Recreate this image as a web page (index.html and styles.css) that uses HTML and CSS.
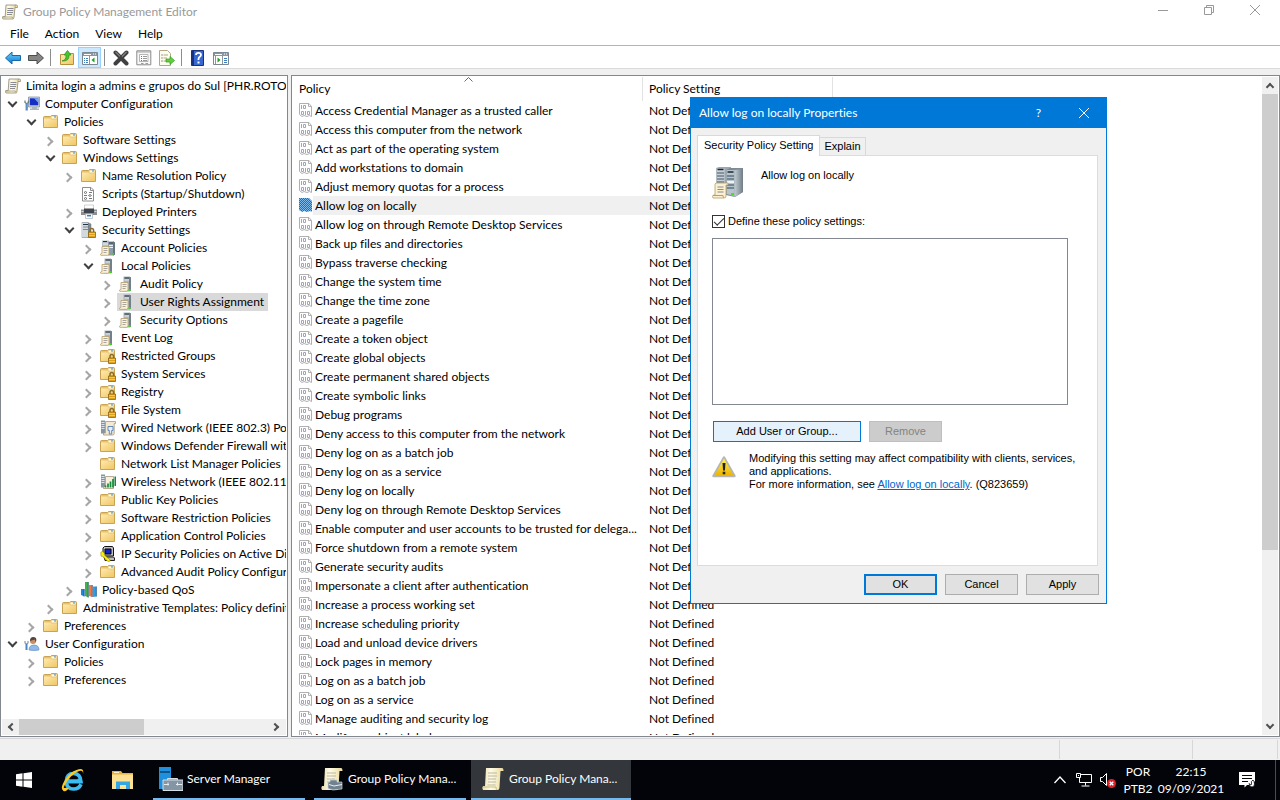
FILE: index.html
```html
<!DOCTYPE html>
<html lang="en">
<head>
    <meta charset="UTF-8">
    <meta name="viewport" content="width=device-width, initial-scale=1.0">
    <title>Group Policy Management Editor</title>
    <link rel="stylesheet" href="styles.css">
</head>
<body>
    <!-- Icon sprite -->
    <svg class="sprite" aria-hidden="true">
        <defs>
            <linearGradient id="gFolder" x1="0" y1="0" x2="1" y2="1"><stop offset="0" stop-color="#ffeab0"/><stop offset="1" stop-color="#efc765"/></linearGradient>
            <linearGradient id="gPaper" x1="0" y1="0" x2="1" y2="0"><stop offset="0" stop-color="#e9dcab"/><stop offset=".4" stop-color="#fffbe6"/><stop offset="1" stop-color="#ead99c"/></linearGradient>
            <linearGradient id="gMetal" x1="0" y1="0" x2="1" y2="0"><stop offset="0" stop-color="#c3ccd3"/><stop offset="1" stop-color="#6f7c86"/></linearGradient>
            <linearGradient id="gBlue" x1="0" y1="0" x2="0" y2="1"><stop offset="0" stop-color="#6fd0ff"/><stop offset="1" stop-color="#0a78cf"/></linearGradient>
            <linearGradient id="gWarn" x1="0" y1="0" x2="0" y2="1"><stop offset="0" stop-color="#fff44a"/><stop offset="1" stop-color="#eeb200"/></linearGradient>
            <pattern id="pDither" width="2" height="2" patternUnits="userSpaceOnUse"><path fill="#0078d7" d="M0 0h1v1H0zM1 1h1v1H1z"/><path fill="#7db8e8" d="M1 0h1v1H1zM0 1h1v1H0z"/></pattern>
        </defs>
        <symbol id="scroll" viewBox="0 0 16 16">
            <path d="M4 1h10.500q1 0 1 1.500v1h-2.500l-1 9.500q0 2-1.500 2H1.500Q.3 15 .5 13.500l.2-.9h2.500z" fill="url(#gPaper)" stroke="#8d8877" stroke-width=".8"/>
            <path d="M.8 13h9.500q0 1.500 1 1.800M13 3.500V2q.3-1 1-1" fill="none" stroke="#a29a7b" stroke-width=".8"/>
            <path d="M5.500 4.500h6M5.300 6.500h6M5 8.500h6M5 10.500h5" stroke="#8b8b93"/>
        </symbol>
        <symbol id="folder" viewBox="0 0 16 16">
            <path d="M.5 3.500q0-1 1-1h6l1-1h5q1 0 1 1v11H.5z" fill="#e9c36b" stroke="#c9a252"/>
            <path d="M8.500 2.500h5v2h-5z" fill="#fff"/><path d="M11 3h2" stroke="#2c8be0"/>
            <path d="M1 4.500h6.500l1 1H14V13H1z" fill="url(#gFolder)"/>
        </symbol>
        <symbol id="lock" viewBox="0 0 16 16">
            <path d="M10 10V8.500q0-2 1.800-2t1.800 2V10" fill="none" stroke="#8a6e2c" stroke-width="1.500"/>
            <path d="M8.500 10h7v5.500h-7z" fill="#dca11e" stroke="#8d6410" stroke-width=".8"/>
            <path d="M9 11.500h6M9 13.500h6" stroke="#f7d264" stroke-width=".8"/>
        </symbol>
        <symbol id="folder-lock" viewBox="0 0 16 16"><use href="#folder"/><use href="#lock"/></symbol>
        <symbol id="tower" viewBox="0 0 16 16">
            <path d="M1 .5h6l3 1.500v13l-3 .5H1z" fill="url(#gMetal)" stroke="#87939b" stroke-width=".6"/>
            <path d="M1 1h6.500v14H1z" fill="#d3dade"/>
            <path d="M2 2.500h5" stroke="#253643"/><path d="M2 5h5M2 7.500h5" stroke="#7d8a94"/><path d="M7.500 1v14" stroke="#66747e" stroke-width=".8"/>
        </symbol>
        <symbol id="tower-lock" viewBox="0 0 16 16"><use href="#tower"/><use href="#lock" x="-1"/></symbol>
        <symbol id="minidoc" viewBox="0 0 16 16">
            <path d="M2 6.500h7v7.300q0 1.500-1.500 1.500H.8q-.8-1.500.5-1.800H2z" fill="#fbf3d8" stroke="#b49c6b" stroke-width=".8"/>
            <path d="M3.500 8.500h4M3.500 10.500h4M3.500 12.500h3" stroke="#96918c" stroke-width=".8"/>
        </symbol>
        <symbol id="server" viewBox="0 0 16 16">
            <path d="M4.500.5H10v15H4.500z" fill="#aab5bd"/><path d="M10 .5l2 .7v13.500l-2 .8z" fill="#71808b"/>
            <path d="M5.500 2H10" stroke="#17242e"/><path d="M5.500 4H10" stroke="#e6ecf0"/>
            <use href="#minidoc"/><path d="M9.500 13h2v2h-2z" fill="#3ed916"/>
        </symbol>
        <symbol id="servers" viewBox="0 0 16 16">
            <path d="M2 .5h7v12H2z" fill="#b4c0c7"/><path d="M8 1.500h6v14H8z" fill="#8f9da6"/><path d="M13 1.500l2 .7v12.500l-2 .8z" fill="#65747e"/>
            <path d="M3 1.500h4M9 3h4" stroke="#22313b"/><path d="M3 4h5M9 5.500h4M9 7.500h4" stroke="#eef2f4"/>
            <use href="#minidoc"/><path d="M12 13h2v1.500h-2z" fill="#3ed916"/>
        </symbol>
        <symbol id="computer" viewBox="0 0 16 16">
            <path d="M4.500 1h11v10h-11z" fill="#cfd6dc" stroke="#8b949c" stroke-width=".8"/>
            <path d="M5.800 2.300h8.500v7H5.800z" fill="#1430c4"/><path d="M10 2.300h4.300v4.500z" fill="#7da3f4"/>
            <path d="M8 11h5v1.500h2V14H6v-1.500h2z" fill="#aeb6bc"/>
            <path d="M1 4.500v2l1.700 1.200 1.700-1.200v-2" fill="none" stroke="#6f7d87" stroke-width="1.300"/><path d="M2.700 7.500v7" stroke="#5b8fc4" stroke-width="2.300"/>
        </symbol>
        <symbol id="user" viewBox="0 0 16 16">
            <path d="M5 14q0-5 5-5t5 5q-5 1-10 0z" fill="#8fb9e8" stroke="#5a86ba" stroke-width=".6"/>
            <circle cx="9" cy="5" r="3" fill="#c58e63"/><path d="M6 5q0-4 3.200-4t3.200 3l-.6 2.500-1-3z" fill="#55453b"/>
            <path d="M1 5v2l1.500 1.200L4 7V5" fill="none" stroke="#8c99a2" stroke-width="1.200"/><path d="M2.500 8V14" stroke="#4d86c0" stroke-width="2"/>
        </symbol>
        <symbol id="script" viewBox="0 0 16 16">
            <path d="M1.500 1.500h8.500l2.500 2.500v11h-11z" fill="#fff" stroke="#8d8d8d"/><path d="M9.500 1.500V4.500h3" fill="none" stroke="#8d8d8d"/>
            <path d="M3 6.500l1.500-1 1.500 1-1.500 1zM8 6.500h3M3 9.500h3M7.500 9.500l1.500-1 1.500 1-1.500 1zM3 12.500l1.500-1 1.500 1-1.500 1zM8 12.500h3" fill="none" stroke="#666" stroke-width=".9"/>
        </symbol>
        <symbol id="printer" viewBox="0 0 16 16">
            <path d="M3.500 1h9v5h-9z" fill="#fff" stroke="#bbb" stroke-width=".7"/>
            <path d="M0 5.500h16V11H0z" fill="#8a8f94"/><path d="M3 4.500h10V9H3z" fill="#40464b"/><path d="M.5 7.500h2M13.500 7.500h2" stroke="#d5d9dc"/>
            <path d="M4.500 10h7v4.500h-7z" fill="#fff" stroke="#a9b3ba" stroke-width=".7"/><path d="M6 11.700h4" stroke="#2c7fc9" stroke-width="1.500"/>
        </symbol>
        <symbol id="wired" viewBox="0 0 16 16">
            <path d="M1 .5h4v13H1z" fill="#8795a0"/><path d="M1.500 2.500h3M1.500 4.500h3M1.500 6.500h3M1.500 8.500h3" stroke="#dce4e9"/>
            <path d="M5.500 1.500h10v2h-1.300v10q0 1.500-1.500 1.500H3.500v-2h2z" fill="#f3ead0" stroke="#a5987a" stroke-width=".8"/>
            <path d="M8 6.500h5v4h-1.300v3.500H9.300v-3.500H8z" fill="#e8eef8" stroke="#6486ba"/>
        </symbol>
        <symbol id="wireless" viewBox="0 0 16 16">
            <path d="M1 .5h4v13H1z" fill="#8795a0"/><path d="M1.500 2.500h3M1.500 4.500h3M1.500 6.500h3M1.500 8.500h3" stroke="#dce4e9"/>
            <path d="M5.500 2.500h8v12H3.500v-2h2z" fill="#f7f0dc" stroke="#a5987a" stroke-width=".8"/>
            <path d="M5.500 13.500v-2M8 13.500V9.500M10.500 13.500V7.500M13 13.500V5M15.300 12V2.500" stroke="#168a3a" stroke-width="1.700"/>
        </symbol>
        <symbol id="ipsec" viewBox="0 0 16 16">
            <path d="M3 2l1.500-1.500h8l1 1.500v8H3z" fill="#c0c0c0" stroke="#111"/><path d="M5 3h6v5H5z" fill="#1024c8" stroke="#000"/>
            <path d="M4 11h9.500l1 1v2.500H5z" fill="#bdbdbd" stroke="#222"/>
            <path d="M.8 6.300l2-1 1.500 2v1.700l6 5-1 1.500-1.800-.3-4.800-5H1z" fill="#fff200" stroke="#7a7000" stroke-width=".5"/>
        </symbol>
        <symbol id="qos" viewBox="0 0 16 16">
            <path d="M0 7h3.500v7.500L0 13z" fill="#1d89d8"/><path d="M4 0h3.500v15.500L4 14z" fill="#44b04c"/><path d="M8 3h3.500v12L8 14z" fill="#ef7a48"/><path d="M12 4.500h3.500v10L12 15z" fill="#2f9fe8"/>
            <path d="M3 7v7.500M7.200 0v15.500M11.200 3v12M15.300 4.500v10" stroke="#234c78" stroke-width=".7"/>
        </symbol>
        <symbol id="bits" viewBox="0 0 14 14">
            <path d="M.5.500h9.500l2.500 3v10l-2-1-2.500 1-3-1-2 1-2.500-2z" fill="#fff" stroke="#b0b0b0"/><path d="M9.500.500V3.500H12.500" fill="none" stroke="#b0b0b0"/>
            <path d="M2.500 2v4M4.500 2.500h2v3h-2zM2.500 8.500h2v3h-2zM6.500 8v4M8.500 8.500h2v3h-2z" fill="none" stroke="#a4a4b6"/>
        </symbol>
        <symbol id="bits-selected" viewBox="0 0 14 14"><path d="M0 0h10l3 3v11l-2-1-3 1-3-1-2 1-3-2z" fill="url(#pDither)"/></symbol>
    </svg>

    <div class="desktop">
        <main class="window">
            <header class="titlebar">
                <svg class="icon"><use href="#scroll"/></svg>
                <h1>Group Policy Management Editor</h1>
                <div class="window-controls">
                    <button type="button" aria-label="Minimize"><svg viewBox="0 0 10 10"><path d="M0 5.500h10"/></svg></button>
                    <button type="button" aria-label="Restore"><svg viewBox="0 0 10 10"><path d="M.5 2.500h7v7h-7zM2.500 2.500v-2h7v7h-2"/></svg></button>
                    <button type="button" aria-label="Close"><svg viewBox="0 0 10 10"><path d="M0 0l10 10M10 0L0 10"/></svg></button>
                </div>
            </header>

            <nav class="menubar">
                <button type="button">File</button>
                <button type="button">Action</button>
                <button type="button">View</button>
                <button type="button">Help</button>
            </nav>

            <div class="toolbar">
                <button type="button" aria-label="Back"><svg class="icon" viewBox="0 0 16 16"><path d="M.5 8L7 2v3.500h8.500v5H7V14z" fill="url(#gBlue)" stroke="#1668a8"/></svg></button>
                <button type="button" aria-label="Forward"><svg class="icon" viewBox="0 0 16 16"><path d="M15.500 8L9 2v3.500H.5v5H9V14z" fill="#858585" stroke="#4c4c4c"/></svg></button>
                <span class="separator"></span>
                <button type="button" aria-label="Up one level"><svg class="icon" viewBox="0 0 16 16"><path d="M1.500 4.500h6l1-1h6v11h-13z" fill="url(#gFolder)" stroke="#b98f3e"/><path d="M3 11q4.500-1 4-6H5l3.500-4.500L12 5h-2q.5 6.500-7 6z" fill="#44c62c" stroke="#2c8c1c" stroke-width=".7"/></svg></button>
                <button type="button" class="pressed" aria-label="Show console tree"><svg class="icon" viewBox="0 0 16 16"><path d="M.5 2.500h15v12H.5z" fill="#fff" stroke="#7b8791"/><path d="M1 3h14v3H1z" fill="#8b96a0"/><path d="M11 4h1M13 4h1M2 4.500h7" stroke="#fff"/><path d="M7.500 6v8" stroke="#8b96a0"/><path d="M2 8.500h1M2 10.500h1M2 12.500h1M4 8.500h2M4 10.500h2M4 12.500h2" stroke="#3f7cbb"/><path d="M12.500 7.500v5l-3-2.500z" fill="#1f9f22"/></svg></button>
                <span class="separator"></span>
                <button type="button" aria-label="Delete"><svg class="icon" viewBox="0 0 16 16"><path d="M2.500 2.500l11 11M13.500 2.500l-11 11" stroke="#404040" stroke-width="4" stroke-linecap="round"/><path d="M2.500 1.800l4.500 4.500M13.500 1.800L9 6.500" stroke="#858585" stroke-width="1.200"/></svg></button>
                <button type="button" aria-label="Properties"><svg class="icon" viewBox="0 0 16 16"><path d="M.8.800h14v14H.8z" fill="#f7f7f7" stroke="#8b8b8b"/><path d="M1 2h13.500" stroke="#a5a5a5"/><path d="M3.500 4.500h8.500v7H3.500z" fill="#fff" stroke="#999" stroke-width=".7"/><path d="M5 6.500h1M5 8.500h1M5 10.500h1" stroke="#2b7fc6"/><path d="M7 6.500h4M7 8.500h4M7 10.500h4" stroke="#999"/><path d="M5 13.500h2.500M9.500 13.500H12" stroke="#40bde8"/></svg></button>
                <button type="button" aria-label="Export list"><svg class="icon" viewBox="0 0 16 16"><path d="M.5.500h8l3 3v12H.5z" fill="#fffdf0" stroke="#b3a888"/><path d="M2.500 5h1M2.500 8h1M2.500 11h1" stroke="#333"/><path d="M4.500 5H9M4.500 8H8M4.500 11H8" stroke="#b5a77c"/><path d="M7 9h4V6.500l4.500 4-4.500 4V12H7z" fill="#5fd23a" stroke="#2f9821" stroke-width=".7"/></svg></button>
                <span class="separator"></span>
                <button type="button" aria-label="Help"><svg class="icon" viewBox="0 0 16 16"><path d="M1.500.5h12v15h-12z" fill="#3767cf" stroke="#17337d"/><path d="M2 1h2v14H2z" fill="#17337d"/><path d="M6 5q0-2.200 2.500-2.200t2.500 2q0 1.200-1.200 2T8.500 9v1" fill="none" stroke="#fff" stroke-width="1.800"/><path d="M7.500 11.500h2v2h-2z" fill="#fff"/></svg></button>
                <button type="button" aria-label="Show action pane"><svg class="icon" viewBox="0 0 16 16"><path d="M.5 2.500h15v12H.5z" fill="#fff" stroke="#7b8791"/><path d="M1 3h14v3H1z" fill="#8b96a0"/><path d="M11 4h1M13 4h1M2 4.500h7" stroke="#fff"/><path d="M9.500 6v8M2.500 6v8" stroke="#8b96a0"/><path d="M11 8.500h3M11 10.500h3M11 12.500h3" stroke="#3f7cbb"/><path d="M4.500 7.500v5l3-2.500z" fill="#1f9f22"/></svg></button>
            </div>

            <div class="panes">
                <section class="pane tree-pane" aria-label="Console tree">
                    <div class="tree-view">
                        <ul class="tree">
                            <li><span class="node"><svg class="icon"><use href="#scroll"/></svg>Limita login a admins e grupos do Sul [PHR.ROTO.LOCAL]</span>
                                <ul class="top-level">
                                    <li><i class="arrow open"></i><span class="node"><svg class="icon"><use href="#computer"/></svg>Computer Configuration</span>
                                        <ul>
                                            <li><i class="arrow open"></i><span class="node"><svg class="icon"><use href="#folder"/></svg>Policies</span>
                                                <ul>
                                                    <li><i class="arrow"></i><span class="node"><svg class="icon"><use href="#folder"/></svg>Software Settings</span></li>
                                                    <li><i class="arrow open"></i><span class="node"><svg class="icon"><use href="#folder"/></svg>Windows Settings</span>
                                                        <ul>
                                                            <li><i class="arrow"></i><span class="node"><svg class="icon"><use href="#folder"/></svg>Name Resolution Policy</span></li>
                                                            <li><i class="arrow none"></i><span class="node"><svg class="icon"><use href="#script"/></svg>Scripts (Startup/Shutdown)</span></li>
                                                            <li><i class="arrow"></i><span class="node"><svg class="icon"><use href="#printer"/></svg>Deployed Printers</span></li>
                                                            <li><i class="arrow open"></i><span class="node"><svg class="icon"><use href="#tower-lock"/></svg>Security Settings</span>
                                                                <ul>
                                                                    <li><i class="arrow"></i><span class="node"><svg class="icon"><use href="#servers"/></svg>Account Policies</span></li>
                                                                    <li><i class="arrow open"></i><span class="node"><svg class="icon"><use href="#server"/></svg>Local Policies</span>
                                                                        <ul>
                                                                            <li><i class="arrow"></i><span class="node"><svg class="icon"><use href="#server"/></svg>Audit Policy</span></li>
                                                                            <li><i class="arrow"></i><span class="node selected"><svg class="icon"><use href="#server"/></svg>User Rights Assignment</span></li>
                                                                            <li><i class="arrow"></i><span class="node"><svg class="icon"><use href="#server"/></svg>Security Options</span></li>
                                                                        </ul>
                                                                    </li>
                                                                    <li><i class="arrow"></i><span class="node"><svg class="icon"><use href="#server"/></svg>Event Log</span></li>
                                                                    <li><i class="arrow"></i><span class="node"><svg class="icon"><use href="#folder-lock"/></svg>Restricted Groups</span></li>
                                                                    <li><i class="arrow"></i><span class="node"><svg class="icon"><use href="#folder-lock"/></svg>System Services</span></li>
                                                                    <li><i class="arrow"></i><span class="node"><svg class="icon"><use href="#folder-lock"/></svg>Registry</span></li>
                                                                    <li><i class="arrow"></i><span class="node"><svg class="icon"><use href="#folder-lock"/></svg>File System</span></li>
                                                                    <li><i class="arrow"></i><span class="node"><svg class="icon"><use href="#wired"/></svg>Wired Network (IEEE 802.3) Policies</span></li>
                                                                    <li><i class="arrow"></i><span class="node"><svg class="icon"><use href="#folder"/></svg>Windows Defender Firewall with Advanced Security</span></li>
                                                                    <li><i class="arrow none"></i><span class="node"><svg class="icon"><use href="#folder"/></svg>Network List Manager Policies</span></li>
                                                                    <li><i class="arrow"></i><span class="node"><svg class="icon"><use href="#wireless"/></svg>Wireless Network (IEEE 802.11) Policies</span></li>
                                                                    <li><i class="arrow"></i><span class="node"><svg class="icon"><use href="#folder"/></svg>Public Key Policies</span></li>
                                                                    <li><i class="arrow"></i><span class="node"><svg class="icon"><use href="#folder"/></svg>Software Restriction Policies</span></li>
                                                                    <li><i class="arrow"></i><span class="node"><svg class="icon"><use href="#folder"/></svg>Application Control Policies</span></li>
                                                                    <li><i class="arrow"></i><span class="node"><svg class="icon"><use href="#ipsec"/></svg>IP Security Policies on Active Directory</span></li>
                                                                    <li><i class="arrow"></i><span class="node"><svg class="icon"><use href="#folder"/></svg>Advanced Audit Policy Configuration</span></li>
                                                                </ul>
                                                            </li>
                                                            <li><i class="arrow"></i><span class="node"><svg class="icon"><use href="#qos"/></svg>Policy-based QoS</span></li>
                                                        </ul>
                                                    </li>
                                                    <li><i class="arrow"></i><span class="node"><svg class="icon"><use href="#folder"/></svg>Administrative Templates: Policy definitions</span></li>
                                                </ul>
                                            </li>
                                            <li><i class="arrow"></i><span class="node"><svg class="icon"><use href="#folder"/></svg>Preferences</span></li>
                                        </ul>
                                    </li>
                                    <li><i class="arrow open"></i><span class="node"><svg class="icon"><use href="#user"/></svg>User Configuration</span>
                                        <ul>
                                            <li><i class="arrow"></i><span class="node"><svg class="icon"><use href="#folder"/></svg>Policies</span></li>
                                            <li><i class="arrow"></i><span class="node"><svg class="icon"><use href="#folder"/></svg>Preferences</span></li>
                                        </ul>
                                    </li>
                                </ul>
                            </li>
                        </ul>
                    </div>
                    <div class="scrollbar horizontal">
                        <i class="scroll-arrow left"></i>
                        <div class="track"><div class="thumb"></div></div>
                        <i class="scroll-arrow right"></i>
                    </div>
                </section>

                <section class="pane list-pane" aria-label="Policies">
                    <div class="list-view">
                        <table class="policies">
                            <colgroup><col class="col-policy"><col class="col-setting"></colgroup>
                            <thead>
                                <tr><th class="sorted">Policy<svg class="sort-mark" viewBox="0 0 9 5"><path d="M.5 4.500l4-4 4 4"/></svg></th><th>Policy Setting</th></tr>
                            </thead>
                            <tbody>
                                <tr><td><svg><use href="#bits"/></svg>Access Credential Manager as a trusted caller</td><td>Not Defined</td></tr>
                                <tr><td><svg><use href="#bits"/></svg>Access this computer from the network</td><td>Not Defined</td></tr>
                                <tr><td><svg><use href="#bits"/></svg>Act as part of the operating system</td><td>Not Defined</td></tr>
                                <tr><td><svg><use href="#bits"/></svg>Add workstations to domain</td><td>Not Defined</td></tr>
                                <tr><td><svg><use href="#bits"/></svg>Adjust memory quotas for a process</td><td>Not Defined</td></tr>
                                <tr class="current"><td><svg><use href="#bits-selected"/></svg>Allow log on locally</td><td>Not Defined</td></tr>
                                <tr><td><svg><use href="#bits"/></svg>Allow log on through Remote Desktop Services</td><td>Not Defined</td></tr>
                                <tr><td><svg><use href="#bits"/></svg>Back up files and directories</td><td>Not Defined</td></tr>
                                <tr><td><svg><use href="#bits"/></svg>Bypass traverse checking</td><td>Not Defined</td></tr>
                                <tr><td><svg><use href="#bits"/></svg>Change the system time</td><td>Not Defined</td></tr>
                                <tr><td><svg><use href="#bits"/></svg>Change the time zone</td><td>Not Defined</td></tr>
                                <tr><td><svg><use href="#bits"/></svg>Create a pagefile</td><td>Not Defined</td></tr>
                                <tr><td><svg><use href="#bits"/></svg>Create a token object</td><td>Not Defined</td></tr>
                                <tr><td><svg><use href="#bits"/></svg>Create global objects</td><td>Not Defined</td></tr>
                                <tr><td><svg><use href="#bits"/></svg>Create permanent shared objects</td><td>Not Defined</td></tr>
                                <tr><td><svg><use href="#bits"/></svg>Create symbolic links</td><td>Not Defined</td></tr>
                                <tr><td><svg><use href="#bits"/></svg>Debug programs</td><td>Not Defined</td></tr>
                                <tr><td><svg><use href="#bits"/></svg>Deny access to this computer from the network</td><td>Not Defined</td></tr>
                                <tr><td><svg><use href="#bits"/></svg>Deny log on as a batch job</td><td>Not Defined</td></tr>
                                <tr><td><svg><use href="#bits"/></svg>Deny log on as a service</td><td>Not Defined</td></tr>
                                <tr><td><svg><use href="#bits"/></svg>Deny log on locally</td><td>Not Defined</td></tr>
                                <tr><td><svg><use href="#bits"/></svg>Deny log on through Remote Desktop Services</td><td>Not Defined</td></tr>
                                <tr><td><svg><use href="#bits"/></svg>Enable computer and user accounts to be trusted for delega...</td><td>Not Defined</td></tr>
                                <tr><td><svg><use href="#bits"/></svg>Force shutdown from a remote system</td><td>Not Defined</td></tr>
                                <tr><td><svg><use href="#bits"/></svg>Generate security audits</td><td>Not Defined</td></tr>
                                <tr><td><svg><use href="#bits"/></svg>Impersonate a client after authentication</td><td>Not Defined</td></tr>
                                <tr><td><svg><use href="#bits"/></svg>Increase a process working set</td><td>Not Defined</td></tr>
                                <tr><td><svg><use href="#bits"/></svg>Increase scheduling priority</td><td>Not Defined</td></tr>
                                <tr><td><svg><use href="#bits"/></svg>Load and unload device drivers</td><td>Not Defined</td></tr>
                                <tr><td><svg><use href="#bits"/></svg>Lock pages in memory</td><td>Not Defined</td></tr>
                                <tr><td><svg><use href="#bits"/></svg>Log on as a batch job</td><td>Not Defined</td></tr>
                                <tr><td><svg><use href="#bits"/></svg>Log on as a service</td><td>Not Defined</td></tr>
                                <tr><td><svg><use href="#bits"/></svg>Manage auditing and security log</td><td>Not Defined</td></tr>
                                <tr><td><svg><use href="#bits"/></svg>Modify an object label</td><td>Not Defined</td></tr>
                            </tbody>
                        </table>
                    </div>
                    <div class="scrollbar vertical">
                        <i class="scroll-arrow up"></i>
                        <div class="track"><div class="thumb"></div></div>
                        <i class="scroll-arrow down"></i>
                    </div>
                </section>
            </div>

            <footer class="statusbar"><span></span><span></span><span></span></footer>
        </main>

        <!-- Properties dialog -->
        <form class="dialog" role="dialog" aria-labelledby="dialogTitle">
            <header class="dialog-title">
                <h2 id="dialogTitle">Allow log on locally Properties</h2>
                <button type="button">?</button>
                <button type="button" aria-label="Close"><svg viewBox="0 0 10 10"><path d="M0 0l10 10M10 0L0 10"/></svg></button>
            </header>
            <div class="dialog-body">
                <div class="tabs" role="tablist">
                    <button type="button" role="tab" class="tab active">Security Policy Setting</button>
                    <button type="button" role="tab" class="tab">Explain</button>
                </div>
                <div class="tab-page">
                    <div class="policy-head">
                        <svg viewBox="0 0 32 32">
                            <path d="M4 1l3-1h12v28H4z" fill="#9ba8b1"/><path d="M4.500 1.500h8V26h-8z" fill="#c7d0d6"/><path d="M5.500 2.500h6" stroke="#1c2a34" stroke-width="1.500"/><path d="M5 6h7M5 9h7M5 12h7M5 15h7" stroke="#6d7d89" stroke-width="1.500"/>
                            <path d="M14 3l4-2h13v24l-8 5-9-2z" fill="#7d8b95"/><path d="M14.500 3h8v26l-8-2z" fill="#b7c4cd"/><path d="M22.500 3L31 2v23l-8.500 5z" fill="url(#gMetal)"/>
                            <path d="M15.500 5h6" stroke="#1c2a34" stroke-width="1.500"/><path d="M15 9h7M15 12h7M15 18h7M15 21h7" stroke="#5e7180" stroke-width="1.500"/><path d="M15 14h7v2h-7z" fill="#edf3f7"/><path d="M19 26h3v2.500h-3z" fill="#4be01c"/>
                            <path d="M4 16h12v2h-2v11q0 2-2 2H1q-1.500-2 .5-3H3V17z" fill="#fbf1cf" stroke="#b79d65" stroke-width=".8"/><path d="M1 28.500h10q0 2 1 2.300" fill="none" stroke="#b79d65"/><path d="M5.500 20h6M5.500 22.500h6M5.500 25h6" stroke="#8d86a0"/>
                        </svg>
                        <span>Allow log on locally</span>
                    </div>
                    <label class="define"><input type="checkbox" checked>Define these policy settings:</label>
                    <select class="accounts" multiple aria-label="Users and groups"></select>
                    <div class="account-actions">
                        <button type="button" class="btn wide hot">Add User or Group...</button>
                        <button type="button" class="btn" disabled>Remove</button>
                    </div>
                    <div class="notice">
                        <svg viewBox="0 0 24 22"><path d="M12 1.500L22.500 20H1.500z" fill="#f4c400" stroke="#b5b5b5" stroke-width="2.500" stroke-linejoin="round"/><path d="M12 2.500L21.500 19.500h-19z" fill="url(#gWarn)"/><path d="M10.500 7h3l-.6 7.500h-1.800zM10.700 15.800h2.600v2.400h-2.600z" fill="#222"/></svg>
                        <p>Modifying this setting may affect compatibility with clients, services,<br>and applications.<br>For more information, see <a href="#">Allow log on locally</a>. (Q823659)</p>
                    </div>
                </div>
                <div class="dialog-buttons">
                    <button type="submit" class="btn default">OK</button>
                    <button type="button" class="btn">Cancel</button>
                    <button type="button" class="btn">Apply</button>
                </div>
            </div>
        </form>
    </div>

    <footer class="taskbar">
        <button type="button" class="launcher start" aria-label="Start"><svg viewBox="0 0 16 16"><path d="M0 2.300l6.500-1v6.200H0zM7.500 1.200L16 0v7.500H7.500zM0 8.500h6.500v6.200l-6.500-1zM7.500 8.500H16V16l-8.500-1.200z" fill="#fff"/></svg></button>
        <button type="button" class="launcher" aria-label="Internet Explorer"><svg viewBox="0 0 24 24"><path d="M20 16.200Q18 21 12.500 21 5.500 21 5.300 13.500 5.500 5.500 12.500 5.500t7.500 8.300H6.500M6.500 12.500h13" fill="none" stroke="#3bbcf2" stroke-width="3.600"/><path d="M8.500 11.300q.7-3.300 4.100-3.300t4 3.300z" fill="#020409"/><path d="M2.500 23q-4-2.500 1.500-11T15.500 2Q23.500-1.500 22 6q.3-5-5.500-2.300T6 13.500 3.500 20t4.500.5Q4 24.300 2.500 23z" fill="#f9c92c"/></svg></button>
        <button type="button" class="launcher" aria-label="File Explorer"><svg viewBox="0 0 24 24"><path d="M1 3h9l1.500 2H22v15H1z" fill="#e8b43e"/><path d="M3 4.500h5" stroke="#fff5c9"/><path d="M1 6.500h21V21H1z" fill="#fde293"/><path d="M5 13.500h14V21h-4v-4H9v4H5z" fill="#34a7e2"/></svg></button>
        <button type="button" class="task"><svg viewBox="0 0 24 24"><path d="M0 0h12v22H0z" fill="#1e90dd"/><path d="M1 5h10" stroke="#0b426b" stroke-width="1.500"/><path d="M8.500 13v-1.500h10V13M4 13h20v10.500H4z" fill="#8496a4" stroke="#d5dee5"/><path d="M5 17.500h5M17 17.500h6M9 15.500v3M18.500 15.500v3" stroke="#e6edf1"/></svg>Server Manager</button>
        <button type="button" class="task"><svg viewBox="0 0 24 24"><path d="M5 1h16q1.500 0 1.500 3h-3l-1 16q0 3-2 3H2Q.5 21 2 19h2z" fill="url(#gPaper)"/><path d="M7 6h9M7 9h9M7 12h8M7 15h5" stroke="#b9b6a5"/><path d="M8 15h2v-2h7v2h5v7l-9 1-5-1.500z" fill="#71828e" stroke="#c7d3da" stroke-width=".7"/><path d="M9 17.500l5 1.500 8-1.500" fill="none" stroke="#e9f0f4"/></svg>Group Policy Mana...</button>
        <button type="button" class="task active"><svg viewBox="0 0 24 24"><path d="M5 1h16q1.500 0 1.500 3h-3l-1 16q0 3-2 3H2Q.5 21 2 19h2z" fill="url(#gPaper)"/><path d="M7 6h9M7 9h9M7 12h8M7 15h8M6.500 18h8" stroke="#b9b6a5"/><path d="M2 20h13q0 2 1 3" fill="none" stroke="#cdbd7d"/></svg>Group Policy Mana...</button>
        <div class="tray">
            <button type="button" aria-label="Show hidden icons"><svg class="tray-icon" viewBox="0 0 16 16"><path d="M2.500 11L8 5l5.500 6" fill="none" stroke="#fff" stroke-width="1.300"/></svg></button>
            <button type="button" aria-label="Network"><svg class="tray-icon" viewBox="0 0 16 16"><path d="M5 2.500h10.500v8H3.500V6M9.500 11v2.500M5.500 14h8M.5 1.500h4v4h-4zM2 3.500h1" fill="none" stroke="#fff"/></svg></button>
            <button type="button" aria-label="Volume"><svg class="tray-icon" viewBox="0 0 16 16"><path d="M.5 5.500h2l4-4v12l-4-4h-2z" fill="none" stroke="#fff"/><circle cx="11.500" cy="11.500" r="4.500" fill="#e0202c"/><path d="M9.700 9.700l3.600 3.600M13.300 9.700l-3.600 3.600" stroke="#fff" stroke-width="1.300"/></svg></button>
            <button type="button" class="stacked language"><span>POR</span><span>PTB2</span></button>
            <button type="button" class="stacked clock"><span>22:15</span><span>09/09/2021</span></button>
            <button type="button" class="notifications" aria-label="Notifications"><svg class="tray-icon" viewBox="0 0 16 16"><path d="M0 0h16v9l-3 4H8l-2.500 2.500V13H0z" fill="#fff"/><path d="M3 3.500h10M3 6.500h10M3 9.500h6" stroke="#05070a"/><path d="M14 8q-2.500 1-1.500 4.500-1.500.5-2.500-1 .5 3.500 3 3.500t2.500-3q0-2.500-1.500-4z" fill="#fff" stroke="#05070a" stroke-width=".8"/></svg></button>
            <span class="show-desktop"></span>
        </div>
    </footer>
</body>
</html>
```
FILE: styles.css
```css
:root {
    --accent: #0078d7;
    --face: #f0f0f0;
    --pane-border: #828790;
    --thumb: #cdcdcd;
    --ui-font: Lato, "Open Sans", sans-serif;
    --dialog-font: "Liberation Sans", Arial, sans-serif;
}

*,
*::before {
    box-sizing: border-box;
}

body {
    margin: 0;
    height: 100vh;
    display: flex;
    flex-direction: column;
    overflow: hidden;
    font: 12px/18px var(--ui-font);
    font-variant-ligatures: none;
    color: #000;
    background: var(--face);
}

button {
    margin: 0;
    padding: 0;
    border: 0;
    background: none;
    font: inherit;
    font-variant-ligatures: none;
    color: inherit;
}

svg {
    display: block;
    flex: none;
}

h1, h2, p {
    margin: 0;
    font-size: inherit;
    font-weight: normal;
}

.sprite {
    position: absolute;
    width: 0;
    height: 0;
}

.icon {
    width: 16px;
    height: 16px;
}

.desktop {
    flex: 1;
    min-height: 0;
    position: relative;
    display: flex;
}

.window {
    flex: 1;
    min-width: 0;
    display: flex;
    flex-direction: column;
}

/* Title bar, menu, toolbar */
.titlebar {
    display: flex;
    align-items: center;
    gap: 5px;
    height: 24px;
    padding: 0 2px;
    background: #fff;
    color: #999;
}

.window-controls {
    display: flex;
    margin-left: auto;
}

.window-controls button {
    display: grid;
    place-items: center;
    width: 46px;
    height: 20px;
}

.window-controls svg,
.dialog-title svg {
    width: 10px;
    height: 10px;
    fill: none;
    stroke: #999;
}

.window-controls svg {
    margin-bottom: 4px;
}

.menubar {
    display: flex;
    height: 22px;
    padding: 0 2px 2px;
    background: #fff;
    border-bottom: 1px solid #b4b4b4;
}

.menubar button {
    padding: 0 8px;
}

.toolbar {
    display: flex;
    height: 23px;
    padding: 1px 1px 0;
    background: #fff;
    border-bottom: 1px solid #dadada;
}

.toolbar button {
    display: grid;
    place-items: center;
    width: 23px;
    height: 21px;
}

.toolbar .pressed {
    background: #cce8ff;
    border: 1px solid #99d1ff;
}

.separator {
    width: 5px;
    margin: 2px 0 2px 3px;
    border-left: 1px solid #8c8c8c;
}

/* Panes */
.panes {
    flex: 1;
    min-height: 0;
    display: flex;
    gap: 3px;
    padding: 6px 0 1px;
}

.pane {
    display: flex;
    min-width: 0;
    padding: 1px;
    background: #fff;
    border: 1px solid var(--pane-border);
}

.tree-pane {
    flex: none;
    width: 288px;
    flex-direction: column;
}

.tree-view,
.list-view {
    flex: 1;
    min-width: 0;
    min-height: 0;
    overflow: hidden;
}

.list-pane {
    flex: 1;
}

.tree,
.tree ul {
    margin: 0;
    padding: 0 0 0 19px;
    list-style: none;
    white-space: nowrap;
}

.tree {
    padding-left: 1px;
}

.tree .top-level {
    padding-left: 2px;
}

.node {
    display: inline-flex;
    align-items: center;
    gap: 5px;
    height: 18px;
    padding: 0 4px 0 2px;
    vertical-align: top;
}

.node.selected {
    background: #d9d9d9;
}

.arrow {
    display: inline-grid;
    place-items: center;
    width: 17px;
    height: 18px;
    padding-top: 2px;
    vertical-align: top;
}

.arrow::before,
.scroll-arrow::before {
    content: "";
    width: 7px;
    height: 7px;
    border: solid #a6a6a6;
    border-width: 2px 2px 0 0;
    transform: translateX(-3px) rotate(45deg);
}

.arrow.open::before {
    border-color: #404040;
    transform: translate(-1px, -3px) rotate(135deg);
}

.arrow.none::before {
    display: none;
}

.policies {
    table-layout: fixed;
    width: 540px;
    border-spacing: 0;
}

.col-policy {
    width: 350px;
}

.policies th {
    position: relative;
    height: 24px;
    padding: 0 6px;
    border-right: 1px solid #e2e2e2;
    font-weight: normal;
    text-align: left;
}

.sort-mark {
    position: absolute;
    top: 0;
    left: 50%;
    width: 9px;
    height: 5px;
    margin-left: -4px;
    fill: none;
    stroke: #6a6a6a;
}

.policies td {
    height: 19px;
    padding: 0 0 0 6px;
    line-height: 19px;
    white-space: nowrap;
    overflow: hidden;
}

.policies td svg {
    float: left;
    width: 14px;
    height: 14px;
    margin: 2px 2px 0 0;
}

.current td {
    background: #f0f0f0;
}

.current td:first-child {
    background: linear-gradient(90deg, #fff 20px, #f0f0f0 20px);
}

/* Scroll bars */
.scrollbar {
    flex: none;
    display: flex;
    background: var(--face);
}

.scrollbar.horizontal {
    height: 16px;
}

.scrollbar.vertical {
    width: 16px;
    flex-direction: column;
}

.scroll-arrow {
    display: grid;
    place-items: center;
    width: 17px;
    height: 16px;
}

.vertical .scroll-arrow {
    width: 16px;
    height: 17px;
}

.scroll-arrow::before {
    width: 6px;
    height: 6px;
    border-color: #505050;
}

.scroll-arrow.left::before {
    transform: translateX(1px) rotate(-135deg);
}

.scroll-arrow.up::before {
    transform: translateY(1px) rotate(-45deg);
}

.scroll-arrow.down::before {
    transform: translateY(-2px) rotate(135deg);
}

.track {
    flex: 1;
}

.thumb {
    background: var(--thumb);
}

.horizontal .thumb {
    width: 50%;
    height: 100%;
}

.vertical .thumb {
    height: 73%;
}

.statusbar {
    display: flex;
    justify-content: flex-end;
    height: 22px;
    padding: 1px 2px 1px 0;
    border-top: 1px solid #d7d7d7;
}

.statusbar span {
    border-right: 1px solid #d7d7d7;
    width: 85px;
}

.statusbar span:nth-child(2) {
    width: 133px;
}

/* Dialog */
.dialog {
    position: absolute;
    top: 97px;
    left: 690px;
    width: 417px;
    height: 507px;
    display: flex;
    flex-direction: column;
    background: var(--face);
    border: 1px solid var(--accent);
    font: 11px/13px var(--dialog-font);
}

.dialog-title {
    display: flex;
    align-items: center;
    height: 30px;
    padding-left: 8px;
    background: var(--accent);
    color: #fff;
    font: 12px/18px var(--ui-font);
    font-variant-ligatures: none;
}

.dialog-title h2 {
    flex: 1;
}

.dialog-title button {
    display: grid;
    place-items: center;
    width: 45px;
    height: 30px;
}

.dialog-title svg {
    stroke: #fff;
}

.dialog-body {
    flex: 1;
    display: flex;
    flex-direction: column;
    padding: 7px 7px 8px 6px;
}

.tabs {
    display: flex;
    align-items: flex-end;
    height: 20px;
}

.tab {
    height: 18px;
    padding: 0 4px;
    border: 1px solid #d9d9d9;
    border-width: 1px 1px 0 0;
}

.tab.active {
    position: relative;
    height: 21px;
    margin-bottom: -1px;
    padding: 0 6px 2px;
    border-left-width: 1px;
    background: #fff;
}

.tab-page {
    flex: 1;
    display: flex;
    flex-direction: column;
    align-items: flex-start;
    margin-right: 1px;
    padding: 11px 14px;
    background: #fff;
    border: 1px solid #dcdcdc;
}

.policy-head {
    display: flex;
    gap: 17px;
}

.policy-head svg {
    width: 32px;
    height: 32px;
}

.policy-head span {
    padding-top: 2px;
}

.define {
    display: flex;
    align-items: center;
    gap: 3px;
    margin: 16px 0 10px;
}

.define input {
    appearance: none;
    display: grid;
    place-items: center;
    width: 13px;
    height: 13px;
    margin: 0;
    border: 1px solid #333;
    background: #fff;
}

.define input:checked::before {
    content: "";
    width: 10px;
    height: 5px;
    border: solid #333;
    border-width: 0 0 1px 1px;
    transform: translateY(-1px) rotate(-45deg);
}

.accounts {
    appearance: none;
    width: 356px;
    height: 167px;
    margin: 0;
    padding: 0;
    border: 1px solid #828790;
    border-radius: 0;
    background: #fff;
}

.account-actions {
    display: flex;
    gap: 8px;
    margin: 16px 0 14px 1px;
}

.btn {
    width: 73px;
    height: 21px;
    border: 1px solid #adadad;
    background: #e1e1e1;
}

.btn.wide {
    width: 148px;
}

.btn.hot {
    background: #e5f1fb;
    border-color: var(--accent);
}

.btn.default {
    border: 2px solid var(--accent);
}

.btn:disabled {
    background: #ccc;
    border-color: #bfbfbf;
    color: #838383;
}

.notice {
    display: flex;
    gap: 13px;
}

.notice svg {
    width: 24px;
    height: 22px;
}

.notice p {
    margin-top: -4px;
    white-space: nowrap;
}

.notice a {
    color: #0066cc;
}

.dialog-buttons {
    display: flex;
    justify-content: flex-end;
    gap: 8px;
    margin-top: 8px;
}

/* Taskbar */
.taskbar {
    flex: none;
    display: flex;
    height: 40px;
    background: #020409;
    color: #fff;
}

.taskbar svg {
    width: 24px;
    height: 24px;
}

.launcher {
    display: grid;
    place-items: center;
    width: 50px;
}

.launcher.start {
    width: 48px;
}

.taskbar .start svg {
    width: 16px;
    height: 16px;
}

.task {
    display: flex;
    align-items: center;
    gap: 4px;
    width: 152px;
    margin-left: 5px;
    padding-left: 6px;
    border-bottom: 2px solid #76b9ed;
}

.task + .task {
    margin-left: 9px;
}

.task + .task.active {
    width: 160px;
    margin-left: 5px;
    padding-left: 10px;
    background: #33363a;
}

.tray {
    display: flex;
    align-items: center;
    margin-left: auto;
}

.tray button {
    display: grid;
    place-items: center;
    width: 24px;
    height: 40px;
}

.taskbar .tray-icon {
    width: 16px;
    height: 16px;
}

.tray .stacked {
    grid-auto-rows: 17px;
    align-content: center;
    line-height: 17px;
}

.tray .language {
    width: 36px;
}

.tray .clock {
    width: 70px;
}

.tray .notifications {
    width: 42px;
    margin-right: 7px;
}

.show-desktop {
    width: 5px;
    height: 40px;
    border-left: 1px solid #4a4c50;
}
```
